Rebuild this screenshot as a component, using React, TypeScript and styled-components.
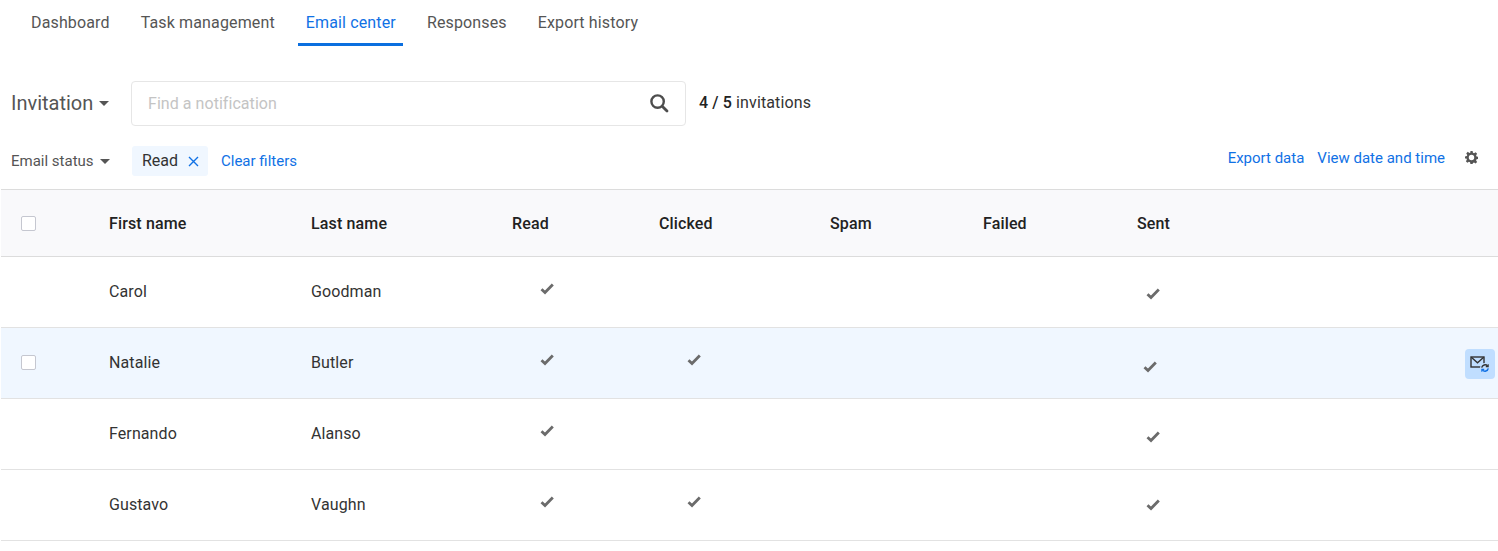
import React from "react";
import styled, { createGlobalStyle } from "styled-components";

const Global = createGlobalStyle`
  html, body { margin: 0; padding: 0; background: #fff; }
  body { font-family: Roboto, "Liberation Sans", sans-serif; color: #333; }
`;

const Page = styled.div`
  width: 1498px;
  height: 551px;
  overflow: hidden;
  display: flex;
  flex-direction: column;
`;

const Tabs = styled.nav`
  display: flex;
  gap: 16px;
  padding-left: 23.5px;
  height: 46px;
`;

const Tab = styled.a<{ $active?: boolean }>`
  box-sizing: border-box;
  height: 46px;
  padding: 13px 7.5px 0;
  font-size: 16px;
  line-height: 19px;
  letter-spacing: 0.14px;
  color: ${(p) => (p.$active ? "#1071e5" : "#555")};
  border-bottom: 3px solid ${(p) => (p.$active ? "#0b6fdf" : "transparent")};
`;

const SearchRow = styled.div`
  display: flex;
  align-items: center;
  height: 46px;
  margin-top: 34px;
  padding-left: 11px;
`;

const TypeSelect = styled.div`
  display: flex;
  align-items: center;
  gap: 6px;
  width: 120px;
  font-size: 20px;
  color: #555;
`;

const Caret = styled.span`
  width: 0;
  height: 0;
  border-left: 5px solid transparent;
  border-right: 5px solid transparent;
  border-top: 5px solid #555;
`;

const SearchBox = styled.div`
  box-sizing: border-box;
  width: 555px;
  height: 45px;
  border: 1px solid #e6e6e6;
  border-radius: 4px;
  display: flex;
  align-items: center;
  justify-content: space-between;
  padding: 0 16px;
  font-size: 16px;
  letter-spacing: 0.05px;
  color: #c4c4c4;
`;

const SearchIcon = styled.svg`
  display: block;
`;

const Count = styled.div`
  margin: -2px 0 0 13px;
  font-size: 16px;
  letter-spacing: 0.12px;
  color: #333;
  b { font-weight: 500; color: #222; }
`;

const FilterRow = styled.div`
  display: flex;
  align-items: flex-start;
  height: 43px;
  margin-top: 20px;
  padding-left: 11px;
`;

const StatusSelect = styled.div`
  display: flex;
  align-items: center;
  gap: 6px;
  width: 121px;
  height: 30px;
  font-size: 15px;
  color: #555;
`;

const Chip = styled.div`
  display: flex;
  align-items: center;
  gap: 10px;
  box-sizing: border-box;
  width: 76px;
  height: 30px;
  padding: 0 0 2px 10px;
  background: #f0f7ff;
  border-radius: 3px;
  font-size: 16px;
  color: #333;
`;

const ChipClose = styled.svg`
  margin-top: 2px;
`;

const Link = styled.a`
  font-size: 15px;
  line-height: 18px;
  color: #1071e5;
`;

const ClearLink = styled(Link)`
  margin: 6px 0 0 13px;
`;

const Actions = styled.div`
  margin: 3px 0 0 auto;
  display: flex;
  align-items: center;
  gap: 13px;
  height: 18px;
  padding: 0 20px 0 0;
`;

const Gear = styled.svg`
  margin-left: 7px;
  margin-top: -1px;
  display: block;
`;

const Table = styled.div`
  margin-left: 1px;
  border-top: 1px solid #dcdcdc;
`;

const Row = styled.div<{ $head?: boolean; $hover?: boolean }>`
  display: grid;
  grid-template-columns: 108px 202px 201px 147px 171px 153px 154px 154px 1fr 30px;
  align-items: center;
  box-sizing: border-box;
  height: ${(p) => (p.$head ? "67px" : "71px")};
  padding: 0 3px ${(p) => (p.$head ? "0" : "2px")} 0;
  background: ${(p) => (p.$head ? "#f9f9fb" : p.$hover ? "#f0f7ff" : "#fff")};
  border-bottom: 1px solid ${(p) => (p.$head ? "#dcdcdc" : "#e2e2e2")};
  font-size: 16px;
  letter-spacing: ${(p) => (p.$head ? "0.14px" : "0.1px")};
  font-weight: ${(p) => (p.$head ? 500 : 400)};
  color: ${(p) => (p.$head ? "#222" : "#333")};
`;

const CheckCell = styled.div`
  display: flex;
  padding-left: 20px;
`;

const Box = styled.span`
  box-sizing: border-box;
  display: block;
  width: 15px;
  height: 15px;
  background: #fff;
  border: 1px solid #c5c7d0;
  border-radius: 2px;
`;

const MarkCell = styled.div<{ $dx: number; $dy: number }>`
  display: flex;
  padding-left: ${(p) => p.$dx}px;
  margin-top: ${(p) => p.$dy}px;
`;

const MarkIcon = styled.svg`
  display: block;
`;

const Resend = styled.button`
  width: 30px;
  height: 30px;
  margin-top: 4px;
  padding: 0;
  border: 0;
  border-radius: 4px;
  background: #c0deff;
  display: flex;
  align-items: center;
  justify-content: center;
`;

const Mark = () => (
  <MarkIcon width="14" height="12" viewBox="0 0 14 12">
    <path d="M1.5 6.3 L5 9.6 L12.8 1.6" fill="none" stroke="#6b6b6b" strokeWidth="2.8" />
  </MarkIcon>
);

type Person = {
  first: string;
  last: string;
  read: [number, number];
  clicked?: [number, number];
  sent: [number, number];
  hover?: boolean;
};

const people: Person[] = [
  { first: "Carol", last: "Goodman", read: [28, -4], sent: [9, 6] },
  { first: "Natalie", last: "Butler", read: [28, -4], clicked: [28, -4], sent: [6, 10], hover: true },
  { first: "Fernando", last: "Alanso", read: [28, -4], sent: [9, 8] },
  { first: "Gustavo", last: "Vaughn", read: [28, -4], clicked: [28, -4], sent: [9, 2] },
];

const heads = ["First name", "Last name", "Read", "Clicked", "Spam", "Failed", "Sent"];

export default function App() {
  return (
    <Page>
      <Global />
      <Tabs>
        <Tab>Dashboard</Tab>
        <Tab>Task management</Tab>
        <Tab $active>Email center</Tab>
        <Tab>Responses</Tab>
        <Tab>Export history</Tab>
      </Tabs>
      <SearchRow>
        <TypeSelect>
          Invitation <Caret />
        </TypeSelect>
        <SearchBox>
          Find a notification
          <SearchIcon width="20" height="20" viewBox="0 0 20 20">
            <circle cx="8.6" cy="8.6" r="6.2" fill="none" stroke="#4d4d4d" strokeWidth="2.4" />
            <path d="M13.2 13.2 L18 18" stroke="#4d4d4d" strokeWidth="2.8" strokeLinecap="round" />
          </SearchIcon>
        </SearchBox>
        <Count>
          <b>4 / 5</b> invitations
        </Count>
      </SearchRow>
      <FilterRow>
        <StatusSelect>
          Email status <Caret />
        </StatusSelect>
        <Chip>
          Read
          <ChipClose width="11" height="11" viewBox="0 0 11 11">
            <path d="M1 1 L10 10 M10 1 L1 10" stroke="#1071e5" strokeWidth="1.4" />
          </ChipClose>
        </Chip>
        <ClearLink>Clear filters</ClearLink>
        <Actions>
          <Link>Export data</Link>
          <Link>View date and time</Link>
          <Gear width="13" height="13" viewBox="0 0 24 24">
            <path
              fill="#555"
              fillRule="evenodd"
              d="M10 0h4l.7 3.4 2 .8L19.6 2.3l2.8 2.8-1.9 2.9.8 2 3.4.7v4l-3.4.7-.8 2 1.9 2.9-2.8 2.8-2.9-1.9-2 .8L14 24h-4l-.7-3.4-2-.8-2.9 1.9-2.8-2.8 1.9-2.9-.8-2L0 14v-4l3.4-.7.8-2-1.9-2.9 2.8-2.8 2.9 1.9 2-.8L10 0zm2 7a5 5 0 1 0 0 10 5 5 0 0 0 0-10z"
            />
          </Gear>
        </Actions>
      </FilterRow>
      <Table>
        <Row $head>
          <CheckCell>
            <Box />
          </CheckCell>
          {heads.map((h) => (
            <div key={h}>{h}</div>
          ))}
        </Row>
        {people.map((p) => (
          <Row key={p.first} $hover={p.hover}>
            <CheckCell>{p.hover && <Box />}</CheckCell>
            <div>{p.first}</div>
            <div>{p.last}</div>
            <MarkCell $dx={p.read[0]} $dy={p.read[1]}>
              <Mark />
            </MarkCell>
            {p.clicked ? (
              <MarkCell $dx={p.clicked[0]} $dy={p.clicked[1]}>
                <Mark />
              </MarkCell>
            ) : (
              <div />
            )}
            <div />
            <div />
            <MarkCell $dx={p.sent[0]} $dy={p.sent[1]}>
              <Mark />
            </MarkCell>
            <div />
            {p.hover ? (
              <Resend aria-label="Resend">
                <svg width="20" height="18" viewBox="0 0 20 18">
                  <rect x="1" y="2" width="13" height="10" fill="none" stroke="#333" strokeWidth="1.4" />
                  <path d="M1.3 2.3 L7.5 7.8 L13.7 2.3" fill="none" stroke="#333" strokeWidth="1.4" />
                  <circle cx="15" cy="13" r="5" fill="#c0deff" />
                  <path d="M11.7 12.6 A3.4 3.4 0 0 1 17.6 11" fill="none" stroke="#333" strokeWidth="1.4" />
                  <path d="M18.3 13.4 A3.4 3.4 0 0 1 12.4 15" fill="none" stroke="#1071e5" strokeWidth="1.4" />
                  <path d="M18.2 9.2 V11.6 H15.8" fill="none" stroke="#333" strokeWidth="1.1" />
                  <path d="M11.8 16.8 V14.4 H14.2" fill="none" stroke="#1071e5" strokeWidth="1.1" />
                </svg>
              </Resend>
            ) : (
              <div />
            )}
          </Row>
        ))}
      </Table>
    </Page>
  );
}
